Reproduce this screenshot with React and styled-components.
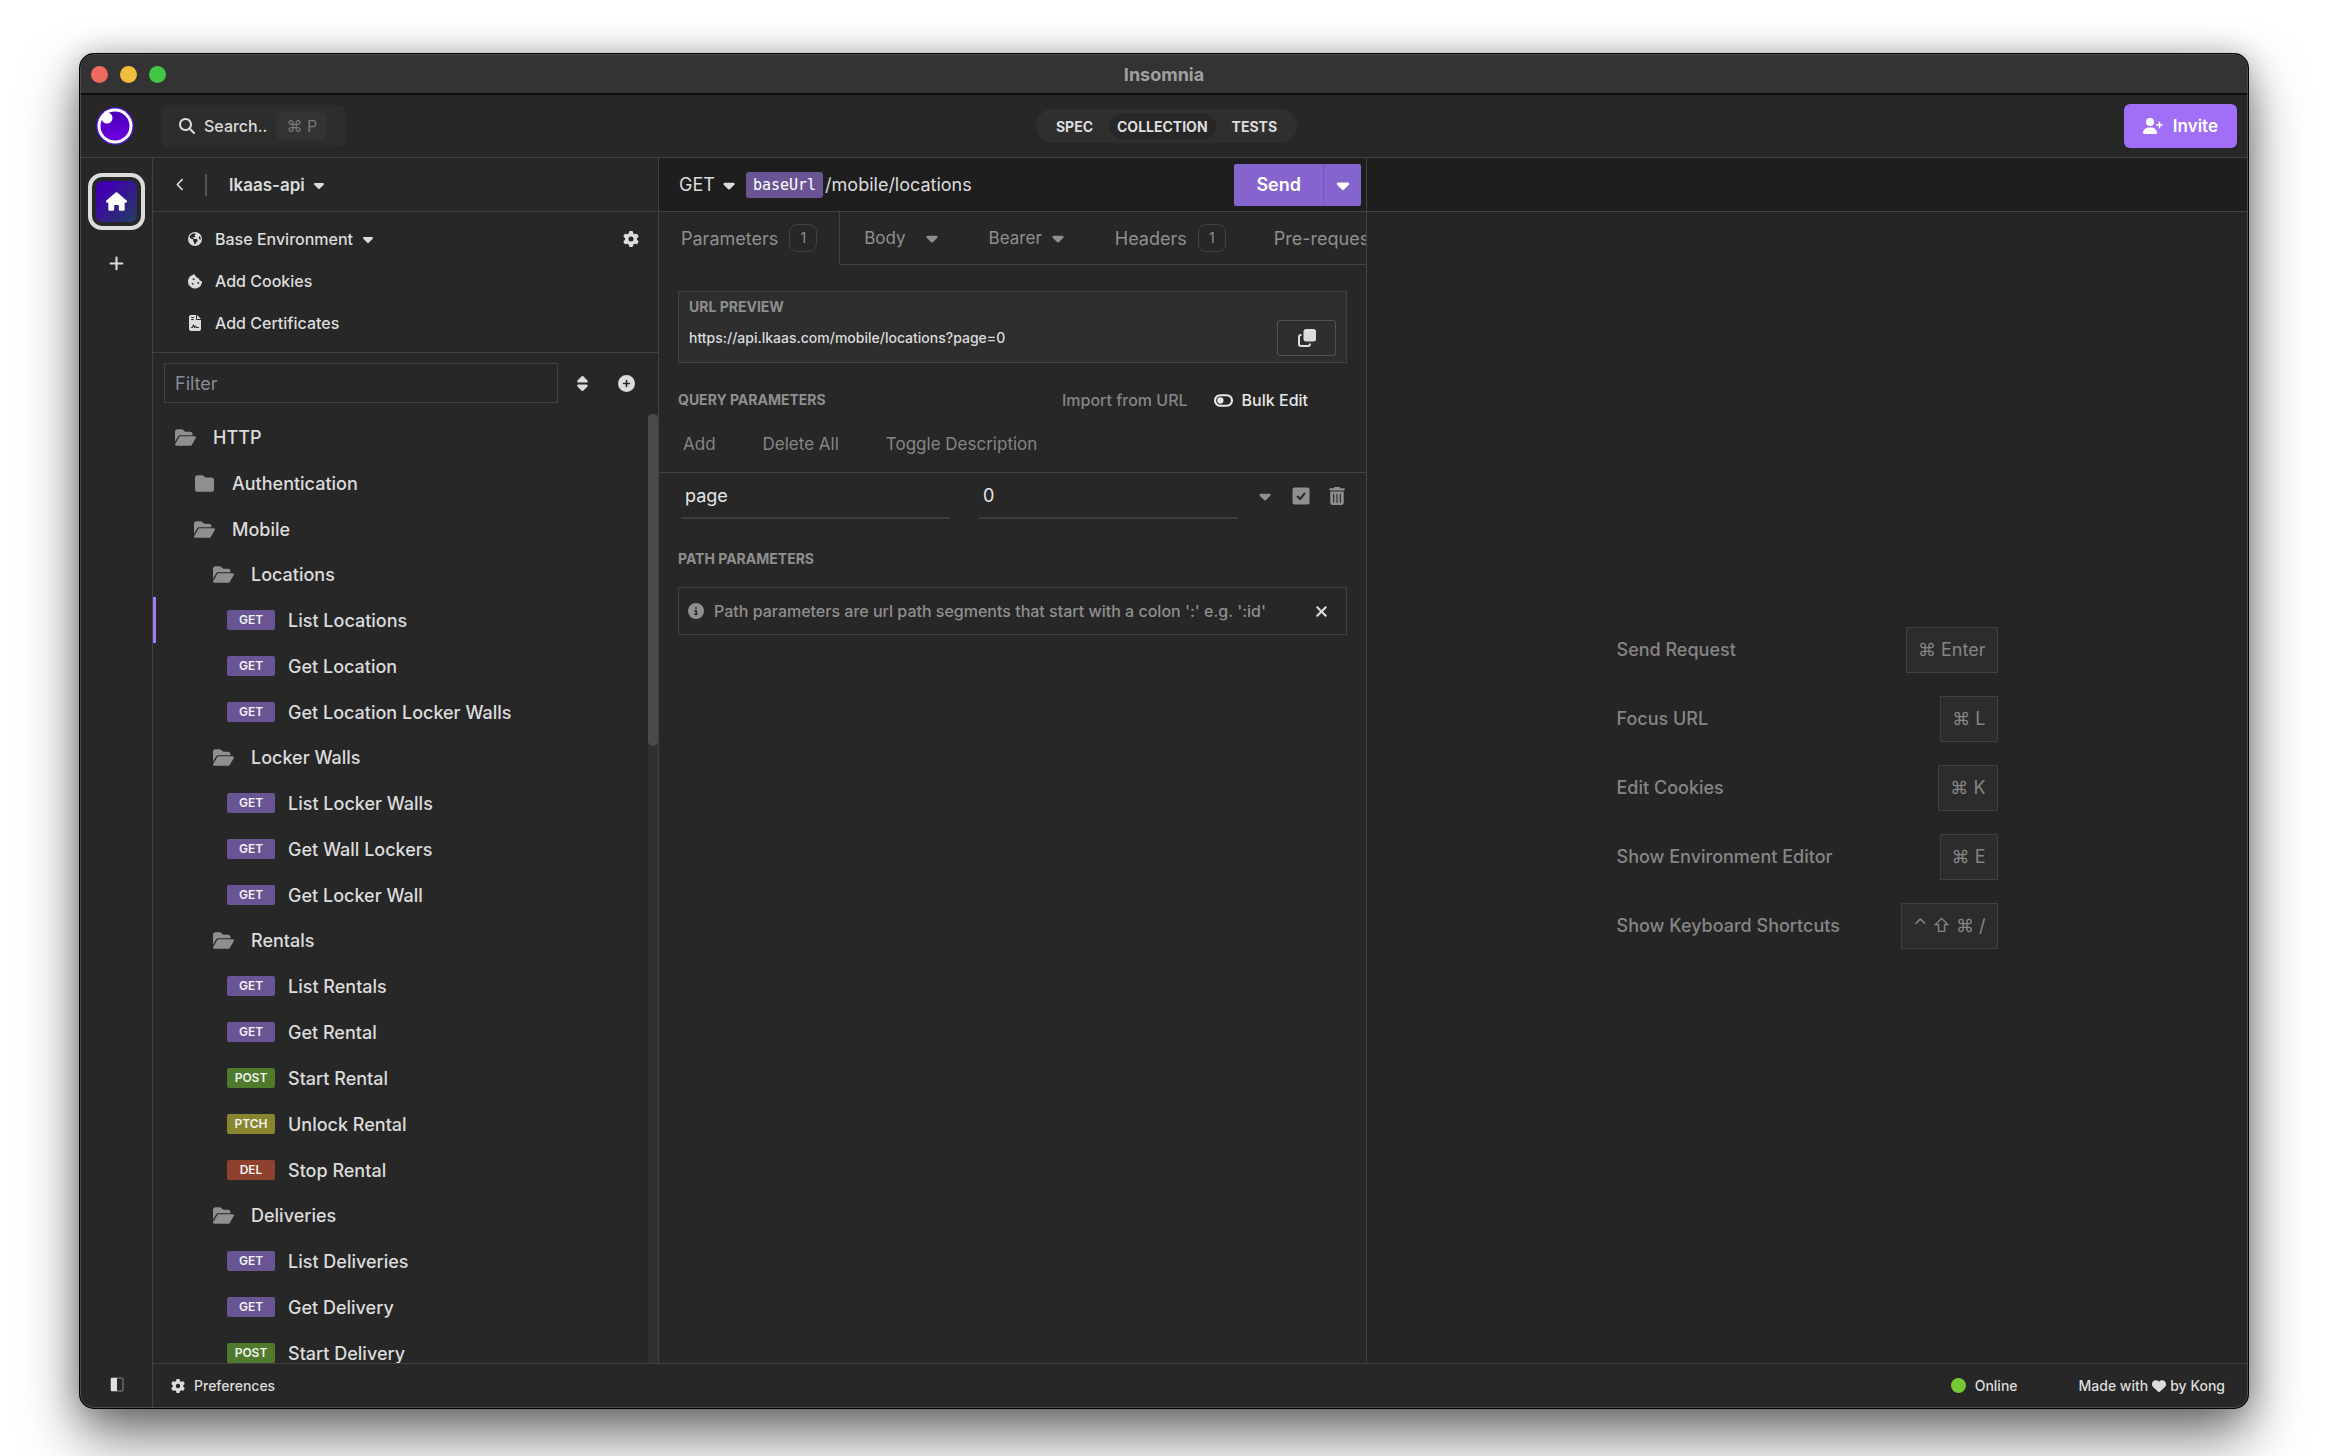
import styled, { createGlobalStyle } from 'styled-components';
import {
  FaCaretDown,
  FaChevronLeft,
  FaCircleInfo,
  FaCirclePlus,
  FaCookieBite,
  FaEarthAmericas,
  FaFileContract,
  FaFolder,
  FaFolderOpen,
  FaGear,
  FaHeart,
  FaHouse,
  FaMagnifyingGlass,
  FaPlus,
  FaSort,
  FaToggleOff,
  FaTrashCan,
  FaUserPlus,
  FaXmark
} from 'react-icons/fa6';

const tree = [
  { name: 'HTTP', depth: 0, open: true },
  { name: 'Authentication', depth: 1 },
  { name: 'Mobile', depth: 1, open: true },
  { name: 'Locations', depth: 2, open: true },
  { name: 'List Locations', method: 'GET', active: true },
  { name: 'Get Location', method: 'GET' },
  { name: 'Get Location Locker Walls', method: 'GET' },
  { name: 'Locker Walls', depth: 2, open: true },
  { name: 'List Locker Walls', method: 'GET' },
  { name: 'Get Wall Lockers', method: 'GET' },
  { name: 'Get Locker Wall', method: 'GET' },
  { name: 'Rentals', depth: 2, open: true },
  { name: 'List Rentals', method: 'GET' },
  { name: 'Get Rental', method: 'GET' },
  { name: 'Start Rental', method: 'POST' },
  { name: 'Unlock Rental', method: 'PTCH' },
  { name: 'Stop Rental', method: 'DEL' },
  { name: 'Deliveries', depth: 2, open: true },
  { name: 'List Deliveries', method: 'GET' },
  { name: 'Get Delivery', method: 'GET' },
  { name: 'Start Delivery', method: 'POST' }
];

const methodColors = {
  GET: '#695593',
  POST: '#4f7a2c',
  PTCH: '#88852f',
  DEL: '#8e412d'
};

const shortcuts = [
  { label: 'Send Request', keys: '⌘ Enter' },
  { label: 'Focus URL', keys: '⌘ L' },
  { label: 'Edit Cookies', keys: '⌘ K' },
  { label: 'Show Environment Editor', keys: '⌘ E' },
  { label: 'Show Keyboard Shortcuts', keys: '⌃ ⇧ ⌘ /' }
];

const Logo = () => (
  <svg width="38" height="38" viewBox="0 0 38 38" aria-label="Insomnia">
    <defs>
      <linearGradient id="logo" x1="0" y1="0" x2="0" y2="1">
        <stop offset="0" stopColor="#4800b8" />
        <stop offset="1" stopColor="#6f00e0" />
      </linearGradient>
    </defs>
    <circle cx="19" cy="19" r="19" fill="#4b12c0" />
    <circle cx="19" cy="19" r="17.5" fill="#fff" />
    <circle cx="19" cy="19" r="14.5" fill="url(#logo)" />
    <circle cx="11" cy="11" r="5.5" fill="#fff" />
  </svg>
);

const SidebarIcon = () => (
  <svg width="14" height="16" viewBox="0 0 14 16">
    <rect x="1" y="1" width="12" height="13" rx="1" fill="none" stroke="#8a8a8a" strokeWidth="1" />
    <rect x="1" y="1" width="6" height="13" fill="#e0e0e0" />
  </svg>
);

const CopyIcon = () => (
  <svg width="18" height="18" viewBox="0 0 18 18">
    <rect x="5.5" y="0" width="12.5" height="12.5" rx="2.5" fill="#dcdcdc" />
    <path
      d="M3.5 6H3a2 2 0 0 0-2 2v7a2 2 0 0 0 2 2h7a2 2 0 0 0 2-2v-.5"
      fill="none"
      stroke="#dcdcdc"
      strokeWidth="2"
    />
  </svg>
);

const CheckIcon = () => (
  <svg width="18" height="18" viewBox="0 0 18 18">
    <rect x="0.5" y="0.5" width="17" height="17" rx="2" fill="#8f8f8f" />
    <path d="M5 9l3 3 5-6" fill="none" stroke="#272727" strokeWidth="2" />
  </svg>
);

const App = () => {
  return (
    <>
      <GlobalStyle />
      <Desktop>
        <Window>
          <TitleBar>
            <Lights>
              <Light $color="#ed6a5e" />
              <Light $color="#f0bd3c" />
              <Light $color="#43c645" />
            </Lights>
            <Title>Insomnia</Title>
          </TitleBar>

          <Header>
            <HeaderSide>
              <Logo />
              <SearchButton>
                <FaMagnifyingGlass size={16} />
                Search..
                <SearchKeys>⌘ P</SearchKeys>
              </SearchButton>
            </HeaderSide>
            <Switcher>
              <SwitcherItem>SPEC</SwitcherItem>
              <SwitcherItem $active>COLLECTION</SwitcherItem>
              <SwitcherItem>TESTS</SwitcherItem>
            </Switcher>
            <HeaderSide $end>
              <InviteButton>
                <FaUserPlus size={20} />
                Invite
              </InviteButton>
            </HeaderSide>
          </Header>

          <Body>
            <Rail>
              <HomeButton aria-label="Home">
                <HomeTile>
                  <FaHouse size={21} />
                </HomeTile>
              </HomeButton>
              <IconButton aria-label="New organization">
                <FaPlus size={17} />
              </IconButton>
              <RailBottom>
                <IconButton aria-label="Toggle sidebar">
                  <SidebarIcon />
                </IconButton>
              </RailBottom>
            </Rail>

            <Main>
              <Columns>
                <Sidebar>
                  <WorkspaceBar>
                    <IconButton aria-label="Back">
                      <FaChevronLeft size={13} />
                    </IconButton>
                    <Divider />
                    <WorkspaceButton>
                      lkaas-api
                      <FaCaretDown size={16} />
                    </WorkspaceButton>
                  </WorkspaceBar>

                  <EnvSection>
                    <EnvRow>
                      <EnvButton>
                        <FaEarthAmericas size={14} />
                        <span>Base Environment</span>
                        <FaCaretDown size={16} />
                      </EnvButton>
                      <IconButton aria-label="Manage environments">
                        <FaGear size={16} />
                      </IconButton>
                    </EnvRow>
                    <EnvRow>
                      <EnvButton>
                        <FaCookieBite size={15} />
                        Add Cookies
                      </EnvButton>
                    </EnvRow>
                    <EnvRow>
                      <EnvButton>
                        <FaFileContract size={16} />
                        Add Certificates
                      </EnvButton>
                    </EnvRow>
                  </EnvSection>

                  <FilterBar>
                    <FilterInput type="text" placeholder="Filter" aria-label="Filter" />
                    <FilterActions>
                      <IconButton aria-label="Sort">
                        <FaSort size={17} />
                      </IconButton>
                      <IconButton aria-label="Create">
                        <FaCirclePlus size={17} />
                      </IconButton>
                    </FilterActions>
                  </FilterBar>

                  <TreeArea>
                    <Tree>
                      {tree.map(item =>
                        item.method ? (
                          <RequestRow key={item.name} $active={item.active}>
                            <MethodTag $color={methodColors[item.method]}>{item.method}</MethodTag>
                            {item.name}
                          </RequestRow>
                        ) : (
                          <FolderRow key={item.name} $depth={item.depth}>
                            <FolderIcon>
                              {item.open ? <FaFolderOpen size={21} /> : <FaFolder size={19} />}
                            </FolderIcon>
                            {item.name}
                          </FolderRow>
                        )
                      )}
                    </Tree>
                    <ScrollTrack>
                      <ScrollThumb />
                    </ScrollTrack>
                  </TreeArea>
                </Sidebar>

                <RequestPane>
                  <UrlBar>
                    <MethodButton>
                      GET
                      <FaCaretDown size={18} />
                    </MethodButton>
                    <Url>
                      <UrlVariable>baseUrl</UrlVariable>
                      /mobile/locations
                    </Url>
                    <SendGroup>
                      <SendButton>Send</SendButton>
                      <SendMenuButton aria-label="Send options">
                        <FaCaretDown size={20} />
                      </SendMenuButton>
                    </SendGroup>
                  </UrlBar>

                  <Tabs>
                    <Tab $active>
                      Parameters
                      <Count>1</Count>
                    </Tab>
                    <MenuTab $gap={17}>
                      Body
                      <FaCaretDown size={18} />
                    </MenuTab>
                    <MenuTab $gap={7}>
                      Bearer
                      <FaCaretDown size={18} />
                    </MenuTab>
                    <Tab>
                      Headers
                      <Count>1</Count>
                    </Tab>
                    <Tab>Pre-request Script</Tab>
                  </Tabs>

                  <Preview>
                    <PreviewText>
                      <SectionTitle>URL PREVIEW</SectionTitle>
                      <PreviewUrl>https://api.lkaas.com/mobile/locations?page=0</PreviewUrl>
                    </PreviewText>
                    <CopyButton aria-label="Copy URL">
                      <CopyIcon />
                    </CopyButton>
                  </Preview>

                  <QueryHeader>
                    <SectionTitle>QUERY PARAMETERS</SectionTitle>
                    <QueryActions>
                      <TextButton>Import from URL</TextButton>
                      <TextButton $bright>
                        <FaToggleOff size={19} />
                        Bulk Edit
                      </TextButton>
                    </QueryActions>
                  </QueryHeader>

                  <ParamToolbar>
                    <ToolbarButton>Add</ToolbarButton>
                    <ToolbarButton>Delete All</ToolbarButton>
                    <ToolbarButton>Toggle Description</ToolbarButton>
                  </ParamToolbar>

                  <ParamRow>
                    <ParamFields>
                      <ParamInput type="text" defaultValue="page" aria-label="Name" />
                      <ParamInput type="text" defaultValue="0" aria-label="Value" />
                    </ParamFields>
                    <ParamActions>
                      <IconButton aria-label="Parameter type" $muted>
                        <FaCaretDown size={18} />
                      </IconButton>
                      <IconButton aria-label="Disable parameter" $muted>
                        <CheckIcon />
                      </IconButton>
                      <IconButton aria-label="Delete parameter" $muted>
                        <FaTrashCan size={18} />
                      </IconButton>
                    </ParamActions>
                  </ParamRow>

                  <PathSection>
                    <SectionTitle>PATH PARAMETERS</SectionTitle>
                    <Notice>
                      <FaCircleInfo size={16} />
                      <NoticeText>
                        Path parameters are url path segments that start with a colon ':' e.g. ':id'
                      </NoticeText>
                      <IconButton aria-label="Dismiss">
                        <FaXmark size={17} />
                      </IconButton>
                    </Notice>
                  </PathSection>
                </RequestPane>

                <ResponsePane>
                  <ResponseBar />
                  <ResponseBody>
                    <Shortcuts>
                      {shortcuts.map(shortcut => (
                        <Shortcut key={shortcut.label}>
                          {shortcut.label}
                          <Keys>{shortcut.keys}</Keys>
                        </Shortcut>
                      ))}
                    </Shortcuts>
                  </ResponseBody>
                </ResponsePane>
              </Columns>

              <StatusBar>
                <StatusButton>
                  <FaGear size={14} />
                  Preferences
                </StatusButton>
                <StatusGroup>
                  <StatusButton>
                    <OnlineDot />
                    Online
                  </StatusButton>
                  <KongLink href="#kong">
                    Made with <FaHeart size={14} /> by Kong
                  </KongLink>
                </StatusGroup>
              </StatusBar>
            </Main>
          </Body>
        </Window>
      </Desktop>
    </>
  );
};

const GlobalStyle = createGlobalStyle`
  * {
    box-sizing: border-box;
  }

  body {
    margin: 0;
    background: #fff;
    color: #dcdcdc;
    font-family: Inter, "DejaVu Sans", sans-serif;
    font-size: 18px;
    font-weight: 500;
  }

  button {
    padding: 0;
    border: 0;
    background: none;
    color: inherit;
    font: inherit;
    white-space: nowrap;
    cursor: pointer;
  }

  svg {
    flex-shrink: 0;
  }
`;

const Desktop = styled.div`
  display: flex;
  height: 100vh;
  padding: 54px 80px 48px;
  overflow: hidden;
`;

const Window = styled.div`
  flex: 1;
  min-width: 0;
  display: flex;
  flex-direction: column;
  border: 1px solid #4d4d4d;
  border-radius: 14px;
  background: #272727;
  overflow: hidden;
  box-shadow: 0 0 0 1px #000, 0 28px 56px rgba(0, 0, 0, 0.55), 0 0 30px rgba(0, 0, 0, 0.25);
`;

const TitleBar = styled.div`
  display: grid;
  grid-template-columns: 1fr auto 1fr;
  align-items: center;
  height: 40px;
  padding: 0 10px;
  background: #333;
  border-bottom: 2px solid #0c0c0c;
`;

const Lights = styled.div`
  display: flex;
  gap: 12px;
`;

const Light = styled.span`
  width: 17px;
  height: 17px;
  border-radius: 50%;
  background: ${props => props.$color};
`;

const Title = styled.span`
  color: #a0a0a0;
  font-weight: 700;
`;

const Header = styled.header`
  display: grid;
  grid-template-columns: 1fr auto 1fr;
  align-items: center;
  height: 63px;
  padding: 0 10px 0 15px;
  border-bottom: 1px solid #414141;
`;

const HeaderSide = styled.div`
  display: flex;
  align-items: center;
  justify-content: ${props => (props.$end ? 'flex-end' : 'flex-start')};
  gap: 27px;
`;

const SearchButton = styled.button`
  display: flex;
  align-items: center;
  gap: 9px;
  height: 42px;
  padding: 0 18px;
  border-radius: 6px;
  background: #2d2d2d;
  font-size: 16px;
`;

const SearchKeys = styled.kbd`
  padding: 4px 10px;
  border-radius: 6px;
  background: #333;
  color: #777;
  font-family: inherit;
  font-size: 16px;
  font-weight: 400;
`;

const Switcher = styled.nav`
  display: flex;
  align-items: center;
  gap: 8px;
  height: 34px;
  padding: 0 12px;
  border-radius: 17px;
  background: #2f2f2f;
`;

const SwitcherItem = styled.button`
  height: 26px;
  padding: 0 8px;
  border-radius: 13px;
  background: ${props => (props.$active ? '#272727' : 'transparent')};
  font-size: 14px;
  font-weight: 700;
`;

const InviteButton = styled.button`
  display: flex;
  align-items: center;
  gap: 10px;
  height: 44px;
  padding: 0 19px;
  border-radius: 6px;
  background: #a06ef7;
  color: #fff;
  font-size: 17px;
  font-weight: 600;
`;

const Body = styled.div`
  flex: 1;
  min-height: 0;
  display: flex;
`;

const Rail = styled.aside`
  display: flex;
  flex-direction: column;
  align-items: center;
  gap: 21px;
  width: 72px;
  padding-top: 15px;
  border-right: 1px solid #414141;
`;

const RailBottom = styled.div`
  display: flex;
  align-items: center;
  height: 44px;
  margin-top: auto;
`;

const HomeButton = styled.button`
  padding: 4px;
  border: 4px solid #dcdcdc;
  border-radius: 14px;
`;

const HomeTile = styled.span`
  display: flex;
  align-items: center;
  justify-content: center;
  width: 41px;
  height: 41px;
  border-radius: 6px;
  background: linear-gradient(135deg, #4000b0 20%, #23405c);
  color: #fff;
`;

const IconButton = styled.button`
  display: flex;
  align-items: center;
  justify-content: center;
  min-width: 18px;
  height: 24px;
  color: ${props => (props.$muted ? '#8f8f8f' : '#dcdcdc')};
`;

const Main = styled.div`
  flex: 1;
  min-width: 0;
  display: flex;
  flex-direction: column;
`;

const Columns = styled.div`
  flex: 1;
  min-height: 0;
  display: grid;
  grid-template-columns: 506px 708px minmax(0, 1fr);
`;

const Sidebar = styled.section`
  display: flex;
  flex-direction: column;
  min-height: 0;
  border-right: 1px solid #414141;
`;

const WorkspaceBar = styled.div`
  display: flex;
  align-items: center;
  height: 54px;
  padding: 0 18px;
  border-bottom: 1px solid #414141;
`;

const Divider = styled.span`
  width: 2px;
  height: 22px;
  margin: 0 22px 0 16px;
  background: #555;
`;

const WorkspaceButton = styled.button`
  display: flex;
  align-items: center;
  gap: 6px;
  font-size: 17px;
  font-weight: 600;
`;

const EnvSection = styled.div`
  padding: 6px 18px 8px 34px;
  border-bottom: 1px solid #414141;
`;

const EnvRow = styled.div`
  display: flex;
  align-items: center;
  justify-content: space-between;
  height: 42px;
`;

const EnvButton = styled.button`
  display: flex;
  align-items: center;
  gap: 7px;
  font-size: 16px;

  svg:first-child {
    width: 16px;
    margin-right: 5px;
  }
`;

const FilterBar = styled.div`
  display: flex;
  align-items: center;
  padding: 10px 23px 11px 11px;
  gap: 15px;
`;

const FilterActions = styled.div`
  display: flex;
  gap: 26px;
`;

const FilterInput = styled.input`
  flex: 1;
  min-width: 0;
  height: 40px;
  padding: 0 10px;
  border: 1px solid #414141;
  background: transparent;
  color: #dcdcdc;
  font: inherit;
  font-weight: 400;
  outline: none;

  &::placeholder {
    color: #8b8b96;
  }
`;

const TreeArea = styled.div`
  flex: 1;
  min-height: 0;
  display: flex;
`;

const Tree = styled.div`
  flex: 1;
  overflow: hidden;
`;

const FolderRow = styled.button`
  display: flex;
  align-items: center;
  gap: 17px;
  width: 100%;
  height: ${props => (props.$depth === 2 ? 45 : 46)}px;
  padding-left: ${props => 21 + props.$depth * 19}px;
`;

const FolderIcon = styled.span`
  display: flex;
  justify-content: center;
  width: 22px;
  color: #8f8f8f;
`;

const RequestRow = styled.button`
  display: flex;
  align-items: center;
  gap: 13px;
  width: 100%;
  height: 46px;
  padding-left: 71px;
  border-left: 3px solid ${props => (props.$active ? '#a47cf8' : 'transparent')};
`;

const MethodTag = styled.span`
  width: 48px;
  height: 20px;
  border-radius: 2px;
  background: ${props => props.$color};
  color: #f2f2f2;
  font-size: 12px;
  font-weight: 600;
  line-height: 20px;
  text-align: center;
`;

const ScrollTrack = styled.div`
  width: 10px;
  background: #303030;
`;

const ScrollThumb = styled.div`
  height: 35%;
  border-radius: 5px;
  background: #4a4a4a;
`;

const RequestPane = styled.section`
  display: flex;
  flex-direction: column;
  min-width: 0;
  border-right: 1px solid #414141;
`;

const UrlBar = styled.div`
  display: flex;
  align-items: center;
  gap: 8px;
  height: 54px;
  padding: 0 5px 0 20px;
  border-bottom: 1px solid #414141;
  background: #1e1e1e;
`;

const MethodButton = styled.button`
  display: flex;
  align-items: center;
  gap: 5px;
  font-weight: 400;
`;

const Url = styled.div`
  flex: 1;
  display: flex;
  align-items: center;
  gap: 2px;
  font-weight: 400;
`;

const UrlVariable = styled.span`
  padding: 0 7px;
  border-radius: 3px;
  background: #695593;
  color: #fff;
  font-family: "DejaVu Sans Mono", monospace;
  font-size: 15px;
  line-height: 26px;
`;

const SendGroup = styled.div`
  display: flex;
  height: 42px;
  border-radius: 2px;
  background: #8564ce;
  color: #fff;
`;

const SendButton = styled.button`
  padding: 0 22px;
  font-weight: 600;
`;

const SendMenuButton = styled.button`
  display: flex;
  align-items: center;
  justify-content: center;
  width: 38px;
  border-left: 1px solid #7558b8;
`;

const Tabs = styled.div`
  display: flex;
  height: 53px;
  overflow: hidden;
`;

const Tab = styled.button`
  display: flex;
  align-items: center;
  gap: 11px;
  padding: 0 24px;
  border-bottom: 1px solid #414141;
  color: #8f8f8f;
  font-weight: 400;

  ${props => props.$active && `
    padding: 0 22px;
    border-right: 1px solid #414141;
    border-bottom-color: transparent;
  `}
`;

const MenuTab = styled(Tab)`
  gap: ${props => props.$gap}px;
  font-size: 17px;
`;

const Count = styled.span`
  width: 28px;
  border: 1px solid #414141;
  border-radius: 8px;
  font-size: 14px;
  line-height: 26px;
`;

const Preview = styled.div`
  display: flex;
  align-items: flex-end;
  justify-content: space-between;
  height: 72px;
  margin: 26px 19px 0;
  padding: 6px 10px;
  border: 1px solid #414141;
  background: #2e2e2e;
`;

const PreviewText = styled.div`
  align-self: flex-start;
`;

const SectionTitle = styled.h2`
  margin: 0;
  color: #8f8f8f;
  font-size: 14px;
  font-weight: 700;
  line-height: 18px;
`;

const PreviewUrl = styled.p`
  margin: 12px 0 0;
  font-size: 14px;
  line-height: 20px;
`;

const CopyButton = styled.button`
  display: flex;
  align-items: center;
  justify-content: center;
  width: 59px;
  height: 36px;
  border: 1px solid #515151;
  border-radius: 3px;
`;

const QueryHeader = styled.div`
  display: flex;
  align-items: center;
  justify-content: space-between;
  height: 56px;
  padding: 0 58px 0 19px;
  margin-top: 9px;
`;

const QueryActions = styled.div`
  display: flex;
  gap: 26px;
`;

const TextButton = styled.button`
  display: flex;
  align-items: center;
  gap: 9px;
  color: ${props => (props.$bright ? '#e6e6e6' : '#858585')};
  font-size: 16px;
`;

const ToolbarButton = styled(TextButton)`
  font-size: 17px;
  font-weight: 400;
`;

const ParamToolbar = styled.div`
  display: flex;
  gap: 47px;
  height: 45px;
  padding: 0 24px 12px;
  border-bottom: 1px solid #414141;
`;

const ParamRow = styled.div`
  display: flex;
  justify-content: space-between;
  height: 46px;
  padding: 0 20px 0 22px;
`;

const ParamFields = styled.div`
  display: grid;
  grid-template-columns: 269px 259px;
  gap: 29px;
`;

const ParamInput = styled.input`
  min-width: 0;
  padding: 0 4px;
  border: 0;
  border-bottom: 2px solid #3c3c3c;
  background: transparent;
  color: #e6e6e6;
  font: inherit;
  font-weight: 400;
  outline: none;
`;

const ParamActions = styled.div`
  display: flex;
  align-items: center;
  gap: 18px;
`;

const PathSection = styled.div`
  padding: 31px 19px;
`;

const Notice = styled.div`
  display: flex;
  align-items: center;
  height: 48px;
  margin-top: 19px;
  padding: 0 16px 0 9px;
  border: 1px solid #414141;
  color: #8f8f8f;
`;

const NoticeText = styled.span`
  flex: 1;
  margin-left: 10px;
  font-size: 16px;
`;

const ResponsePane = styled.section`
  display: flex;
  flex-direction: column;
  background: #252525;
`;

const ResponseBar = styled.div`
  height: 54px;
  border-bottom: 1px solid #414141;
  background: #1e1e1e;
`;

const ResponseBody = styled.div`
  flex: 1;
  display: flex;
  align-items: center;
  justify-content: center;
`;

const Shortcuts = styled.div`
  display: flex;
  flex-direction: column;
  gap: 23px;
  width: 381px;
`;

const Shortcut = styled.div`
  display: flex;
  align-items: center;
  justify-content: space-between;
  color: #858585;
`;

const Keys = styled.kbd`
  padding: 0 11px;
  border: 1px solid #3f3f3f;
  background: #2c2c2c;
  font-family: inherit;
  font-size: 18px;
  font-weight: 400;
  line-height: 44px;
`;

const StatusBar = styled.footer`
  display: flex;
  align-items: center;
  justify-content: space-between;
  height: 44px;
  padding: 0 22px 0 18px;
  border-top: 1px solid #414141;
`;

const StatusButton = styled.button`
  display: flex;
  align-items: center;
  gap: 9px;
  font-size: 14px;
`;

const StatusGroup = styled.div`
  display: flex;
  align-items: center;
  gap: 61px;
`;

const OnlineDot = styled.span`
  width: 15px;
  height: 15px;
  border-radius: 50%;
  background: #75c934;
`;

const KongLink = styled.a`
  display: flex;
  align-items: center;
  gap: 4px;
  color: inherit;
  font-size: 14px;
  text-decoration: none;
`;

export default App;
